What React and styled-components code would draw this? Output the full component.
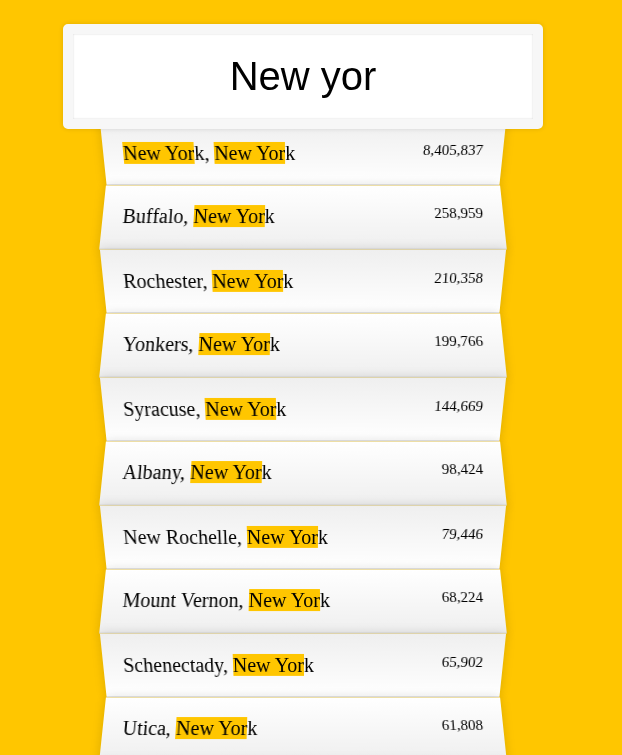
import React, { useState } from 'react'
import styled, { createGlobalStyle } from 'styled-components'

const cities = [
  { city: 'New York', state: 'New York', population: '8405837' },
  { city: 'Los Angeles', state: 'California', population: '3884307' },
  { city: 'Buffalo', state: 'New York', population: '258959' },
  { city: 'Rochester', state: 'New York', population: '210358' },
  { city: 'Yonkers', state: 'New York', population: '199766' },
  { city: 'Syracuse', state: 'New York', population: '144669' },
  { city: 'Albany', state: 'New York', population: '98424' },
  { city: 'New Rochelle', state: 'New York', population: '79446' },
  { city: 'Mount Vernon', state: 'New York', population: '68224' },
  { city: 'Schenectady', state: 'New York', population: '65902' },
  { city: 'Utica', state: 'New York', population: '61808' },
  { city: 'White Plains', state: 'New York', population: '57866' },
]

const GlobalStyle = createGlobalStyle`
  *, *::before, *::after {
    box-sizing: border-box;
  }
  html {
    background: #ffc600;
    font-family: "Liberation Serif", serif;
    font-size: 20px;
    font-weight: 200;
  }
  body {
    margin: 0;
    overflow: hidden;
  }
`

const Page = styled.div`
  padding: 14px 16px 0 0;
`

const Form = styled.form`
  display: flex;
  flex-direction: column;
  max-width: 400px;
  margin: 0 auto;
`

const Search = styled.input`
  display: block;
  position: relative;
  z-index: 2;
  margin: 10px -40px -10px;
  padding: 20px;
  text-align: center;
  outline: 0;
  border: 10px solid #f7f7f7;
  border-radius: 5px;
  background: #fff;
  color: #000;
  font-family: "Liberation Sans", Arial, sans-serif;
  font-size: 40px;
  box-shadow: 0 0 5px rgba(0, 0, 0, 0.12), inset 0 0 2px rgba(0, 0, 0, 0.19);
`

const Suggestions = styled.ul`
  margin: 0;
  padding: 0;
  position: relative;
`

const Suggestion = styled.li`
  list-style: none;
  display: flex;
  justify-content: space-between;
  margin: 0;
  padding: 20px;
  border-bottom: 1px solid #d8d8d8;
  box-shadow: 0 0 10px rgba(0, 0, 0, 0.14);
  text-transform: capitalize;
  background: ${p => p.even
    ? 'linear-gradient(to bottom, #ffffff 0%, #efefef 100%)'
    : 'linear-gradient(to top, #ffffff 0%, #efefef 100%)'};
  transform: ${p => p.even
    ? 'perspective(100px) rotateX(3deg) translateY(2px) scale(1.001)'
    : 'perspective(100px) rotateX(-3deg) translateY(3px)'};
`

const Population = styled.span`
  font-size: 15px;
`

const Hl = styled.span`
  background: #ffc600;
`

const numberWithCommas = x => x.replace(/\B(?=(\d{3})+(?!\d))/g, ',')

function Highlight({ text, query }) {
  if (!query) return text
  const regex = new RegExp(query.replace(/[.*+?^${}()|[\]\\]/g, '\\$&'), 'gi')
  const parts = []
  let last = 0
  let m
  while ((m = regex.exec(text)) !== null) {
    if (m.index > last) parts.push(text.slice(last, m.index))
    parts.push(<Hl key={m.index}>{m[0]}</Hl>)
    last = m.index + m[0].length
    if (m[0].length === 0) regex.lastIndex++
  }
  parts.push(text.slice(last))
  return parts
}

export default function App() {
  const [query, setQuery] = useState('New yor')
  const regex = new RegExp(query.replace(/[.*+?^${}()|[\]\\]/g, '\\$&'), 'gi')
  const matches = cities.filter(p => p.city.match(regex) || p.state.match(regex))

  return (
    <Page>
      <GlobalStyle />
      <Form onSubmit={e => e.preventDefault()}>
        <Search
          type="text"
          className="search"
          placeholder="City or State"
          value={query}
          onChange={e => setQuery(e.target.value)}
        />
        <Suggestions>
          {matches.map((p, i) => (
            <Suggestion key={p.city} even={i % 2 === 1}>
              <span>
                <Highlight text={p.city} query={query} />, <Highlight text={p.state} query={query} />
              </span>
              <Population>{numberWithCommas(p.population)}</Population>
            </Suggestion>
          ))}
        </Suggestions>
      </Form>
    </Page>
  )
}
